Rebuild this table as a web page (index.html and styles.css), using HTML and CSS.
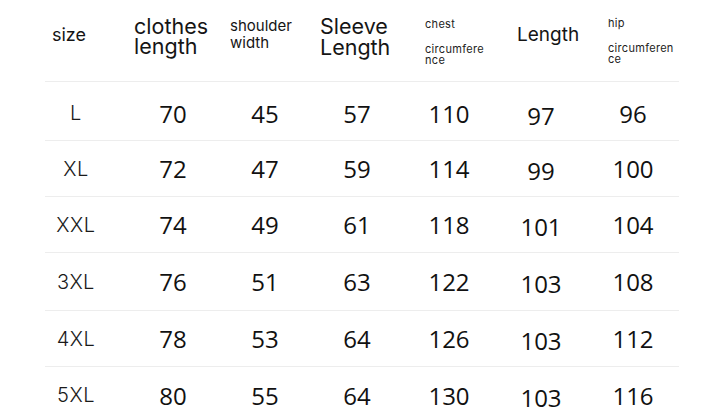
FILE: index.html
```html
<!DOCTYPE html>
<html lang="en">
<head>
<meta charset="utf-8">
<title>Size chart</title>
<link rel="stylesheet" href="styles.css">
</head>
<body>
<div class="chart">
  <div class="row head">
    <div class="hcell h-size">size</div>
    <div class="hcell h-clothes">clothes length</div>
    <div class="hcell h-shoulder">shoulder width</div>
    <div class="hcell h-sleeve">Sleeve Length</div>
    <div class="hcell h-small h-chest"><span class="top">chest</span><span class="wrap">circumference</span></div>
    <div class="hcell h-length">Length</div>
    <div class="hcell h-small h-hip"><span class="top">hip</span><span class="wrap">circumference</span></div>
  </div>
  <div class="row r1">
    <div class="size">L</div><div class="num">70</div><div class="num">45</div><div class="num">57</div><div class="num">110</div><div class="num low">97</div><div class="num">96</div>
  </div>
  <div class="row">
    <div class="size">XL</div><div class="num">72</div><div class="num">47</div><div class="num">59</div><div class="num">114</div><div class="num low">99</div><div class="num">100</div>
  </div>
  <div class="row">
    <div class="size">XXL</div><div class="num">74</div><div class="num">49</div><div class="num">61</div><div class="num">118</div><div class="num low">101</div><div class="num">104</div>
  </div>
  <div class="row r4">
    <div class="size">3XL</div><div class="num">76</div><div class="num">51</div><div class="num">63</div><div class="num">122</div><div class="num low">103</div><div class="num">108</div>
  </div>
  <div class="row">
    <div class="size">4XL</div><div class="num">78</div><div class="num">53</div><div class="num">64</div><div class="num">126</div><div class="num low">103</div><div class="num">112</div>
  </div>
  <div class="row last">
    <div class="size">5XL</div><div class="num">80</div><div class="num">55</div><div class="num">64</div><div class="num">130</div><div class="num low">103</div><div class="num">116</div>
  </div>
</div>
</body>
</html>
```
FILE: styles.css
```css
html, body {
  margin: 0;
  padding: 0;
  background: #ffffff;
}
body {
  width: 720px;
  height: 413px;
  overflow: hidden;
  color: #111111;
  font-family: Inter, "Noto Sans", sans-serif;
}
.chart {
  margin-left: 45px;
  width: 634px;
}
.row {
  display: grid;
  grid-template-columns: 82px repeat(6, 92px);
  align-items: center;
  height: 55px;
  border-bottom: 1px solid #ededed;
}
.row.head {
  height: 81px;
  align-items: start;
}
.row.r1 {
  height: 59px;
  padding-top: 4px;
  box-sizing: border-box;
}
.row.r4 {
  height: 57px;
}
.row.last {
  border-bottom: none;
  height: 56px;
}
.hcell {
  color: #151515;
  font-weight: 400;
}
.h-size {
  padding: 25px 0 0 7px;
  font-size: 18px;
  line-height: 20px;
}
.h-clothes {
  padding: 16px 10px 0 7px;
  font-size: 21.5px;
  line-height: 20px;
}
.h-shoulder {
  padding: 17px 10px 0 11px;
  font-size: 15px;
  line-height: 17px;
}
.h-sleeve {
  padding: 16px 6px 0 9px;
  font-size: 21.5px;
  line-height: 21px;
}
.h-length {
  padding: 25px 0 0 22px;
  font-size: 19px;
  line-height: 20px;
}
.h-small {
  font-size: 11px;
  line-height: 11px;
  letter-spacing: 0.3px;
  color: #222;
  display: flex;
  flex-direction: column;
}
.h-small .wrap {
  word-break: break-all;
  margin-top: 14px;
}
.h-chest {
  padding: 19px 0 0 22px;
}
.h-chest .wrap {
  width: 62px;
}
.h-hip {
  padding: 18px 0 0 21px;
}
.h-hip .wrap {
  width: 68px;
}
.size {
  text-align: center;
  padding-right: 20px;
  font-size: 20px;
  font-weight: 300;
  color: #1a1a1a;
  letter-spacing: 0.5px;
}
.num {
  text-align: center;
  font-family: "Open Sans", "Noto Sans", sans-serif;
  font-stretch: 90%;
  font-size: 24px;
  font-weight: 380;
  color: #111;
}
.num.low {
  padding-top: 4px;
}
```
